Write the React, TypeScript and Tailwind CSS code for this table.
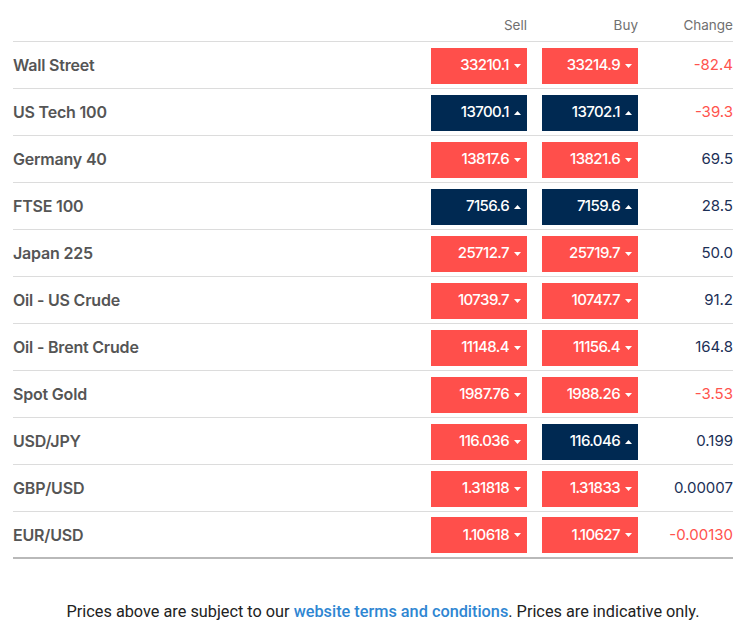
import React from 'react';

type Dir = 'up' | 'down';

interface Market {
  name: string;
  sell: string;
  sellDir: Dir;
  buy: string;
  buyDir: Dir;
  change: string;
}

const markets: Market[] = [
  { name: 'Wall Street', sell: '33210.1', sellDir: 'down', buy: '33214.9', buyDir: 'down', change: '-82.4' },
  { name: 'US Tech 100', sell: '13700.1', sellDir: 'up', buy: '13702.1', buyDir: 'up', change: '-39.3' },
  { name: 'Germany 40', sell: '13817.6', sellDir: 'down', buy: '13821.6', buyDir: 'down', change: '69.5' },
  { name: 'FTSE 100', sell: '7156.6', sellDir: 'up', buy: '7159.6', buyDir: 'up', change: '28.5' },
  { name: 'Japan 225', sell: '25712.7', sellDir: 'down', buy: '25719.7', buyDir: 'down', change: '50.0' },
  { name: 'Oil - US Crude', sell: '10739.7', sellDir: 'down', buy: '10747.7', buyDir: 'down', change: '91.2' },
  { name: 'Oil - Brent Crude', sell: '11148.4', sellDir: 'down', buy: '11156.4', buyDir: 'down', change: '164.8' },
  { name: 'Spot Gold', sell: '1987.76', sellDir: 'down', buy: '1988.26', buyDir: 'down', change: '-3.53' },
  { name: 'USD/JPY', sell: '116.036', sellDir: 'down', buy: '116.046', buyDir: 'up', change: '0.199' },
  { name: 'GBP/USD', sell: '1.31818', sellDir: 'down', buy: '1.31833', buyDir: 'down', change: '0.00007' },
  { name: 'EUR/USD', sell: '1.10618', sellDir: 'down', buy: '1.10627', buyDir: 'down', change: '-0.00130' },
];

const Caret: React.FC<{ dir: Dir }> = ({ dir }) => (
  <svg width="7" height="4" viewBox="0 0 7 4" className="ml-[5px] shrink-0">
    {dir === 'down' ? <path d="M0 0H7L3.5 4Z" fill="white" /> : <path d="M0 4H7L3.5 0Z" fill="white" />}
  </svg>
);

const PriceBox: React.FC<{ value: string; dir: Dir }> = ({ value, dir }) => (
  <div
    className={`w-[96px] h-[36px] flex items-center justify-end pr-[6px] text-white text-[15px] font-medium tracking-[-0.6px] ${
      dir === 'down' ? 'bg-[#ff4f4b]' : 'bg-[#002952]'
    }`}
  >
    {value}
    <Caret dir={dir} />
  </div>
);

const App: React.FC = () => {
  return (
    <div className="min-h-screen bg-white" style={{ fontFamily: 'Inter, "Noto Sans", sans-serif' }}>
      <div className="pl-[13px] pr-[8px]">
        {/* Header */}
        <div className="flex items-end h-[42px] pb-[6px] border-b border-[#dcdcdc] text-[13.5px] text-[#707070]">
          <div className="flex-1" />
          <div className="w-[96px] text-right">Sell</div>
          <div className="w-[96px] ml-[15px] text-right">Buy</div>
          <div className="w-[95px] text-right">Change</div>
        </div>

        {/* Rows */}
        {markets.map((m, i) => (
          <div
            key={m.name}
            className={`flex items-center h-[47px] pt-[1px] ${
              i < markets.length - 1 ? 'border-b border-[#dcdcdc]' : 'border-b-2 border-[#b9b9b9]'
            }`}
          >
            <div className="flex-1 text-[16px] font-semibold text-[#555555] tracking-[-0.2px] -mt-[1px]">{m.name}</div>
            <PriceBox value={m.sell} dir={m.sellDir} />
            <div className="ml-[15px]">
              <PriceBox value={m.buy} dir={m.buyDir} />
            </div>
            <div
              className={`w-[95px] text-right text-[15px] ${
                m.change.startsWith('-') ? 'text-[#ff534d]' : 'text-[#1b2f56]'
              }`}
            >
              {m.change}
            </div>
          </div>
        ))}

        {/* Footer */}
        <p
          className="mt-[41px] pl-[20px] text-center text-[16.3px] text-[#222222]"
          style={{ fontFamily: 'Roboto, "Liberation Sans", sans-serif' }}
        >
          Prices above are subject to our{' '}
          <a href="#" className="text-[#2f86d2] font-medium">
            website terms and conditions
          </a>
          . Prices are indicative only.
        </p>
      </div>
    </div>
  );
};

export default App;
